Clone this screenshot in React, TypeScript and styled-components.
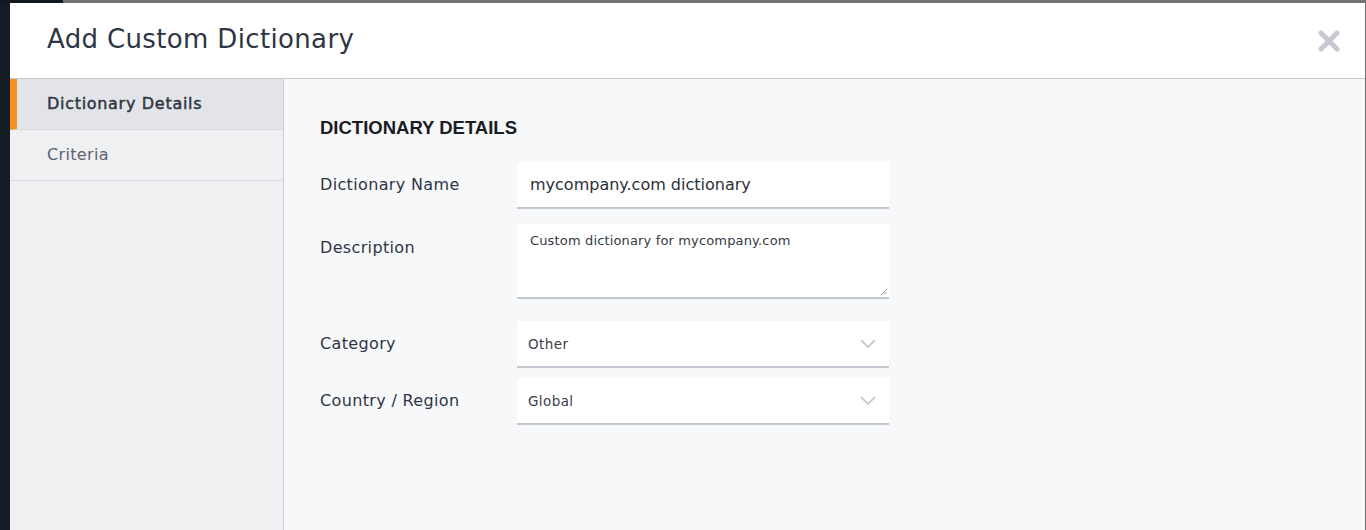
import React from "react";
import styled, { createGlobalStyle } from "styled-components";

const Global = createGlobalStyle`
  html, body { margin: 0; padding: 0; }
  body {
    width: 1366px;
    height: 530px;
    overflow: hidden;
    font-family: "DejaVu Sans", "Liberation Sans", sans-serif;
  }
`;

const Backdrop = styled.div`
  box-sizing: border-box;
  width: 1366px;
  height: 530px;
  padding: 3px 1px 0 10px;
  background:
    linear-gradient(to right, #111821 63px, #747474 63px) top left / 100% 3px no-repeat,
    linear-gradient(to right, #141c26 10px, #6b6b6b 10px);
  display: flex;
`;

const Modal = styled.div`
  flex: 1;
  display: flex;
  flex-direction: column;
  background: #f7f8fa;
  overflow: hidden;
`;

const Header = styled.header`
  height: 76px;
  box-sizing: border-box;
  flex: none;
  background: #ffffff;
  border-bottom: 1px solid #c6c9d1;
  display: flex;
  align-items: center;
  justify-content: space-between;
  padding: 0 24px 4px 37px;
`;

const Title = styled.h1`
  margin: 0;
  font-size: 26px;
  font-weight: 400;
  color: #2e3544;
  letter-spacing: 0.35px;
`;

const CloseButton = styled.button`
  border: 0;
  background: transparent;
  padding: 0;
  margin-top: 4px;
  width: 24px;
  height: 24px;
  display: flex;
  align-items: center;
  justify-content: center;
  cursor: pointer;
`;

const Body = styled.div`
  flex: 1;
  display: flex;
`;

const Sidebar = styled.nav`
  width: 273px;
  flex: none;
  background: #eff0f2;
  border-right: 1px solid #c9ccd2;
`;

const NavItem = styled.div<{ $active?: boolean }>`
  box-sizing: border-box;
  height: 51px;
  display: flex;
  align-items: center;
  padding-left: ${(p) => (p.$active ? "30px" : "37px")};
  padding-bottom: 2px;
  border-left: ${(p) => (p.$active ? "7px solid #f7901e" : "0")};
  border-bottom: 1px solid #d6d8dd;
  background: ${(p) => (p.$active ? "#e3e4e7" : "transparent")};
  color: ${(p) => (p.$active ? "#2e3544" : "#5b6270")};
  font-size: 16px;
  letter-spacing: ${(p) => (p.$active ? "0.7px" : "0.35px")};
  -webkit-text-stroke: ${(p) => (p.$active ? "0.45px #2e3544" : "0")};
`;

const Main = styled.main`
  flex: 1;
  padding: 39px 0 0 36px;
`;

const SectionTitle = styled.h2`
  margin: 0 0 24px;
  font-family: "Liberation Sans", Arial, sans-serif;
  font-weight: 700;
  font-size: 18.5px;
  line-height: 20px;
  color: #1b1d22;
`;

const Form = styled.div`
  display: flex;
  flex-direction: column;
`;

const Row = styled.div<{ $gap: number; $align?: string }>`
  display: grid;
  grid-template-columns: 197px 372px;
  align-items: ${(p) => p.$align || "center"};
  margin-bottom: ${(p) => p.$gap}px;
`;

const Label = styled.label<{ $top?: number }>`
  font-size: 16px;
  letter-spacing: 0.35px;
  color: #2e3544;
  padding-top: ${(p) => p.$top || 0}px;
  padding-bottom: ${(p) => (p.$top ? 0 : 2)}px;
`;

const Field = styled.div<{ $h: number }>`
  box-sizing: border-box;
  height: ${(p) => p.$h}px;
  background: #ffffff;
  border-radius: 2px 2px 0 0;
  border-bottom: 2px solid #c3c7d0;
  position: relative;
  display: flex;
  align-items: center;
  padding: 0 13px;
`;

const InputText = styled.span`
  font-size: 16px;
  color: #2b2f38;
`;

const AreaField = styled(Field)`
  align-items: flex-start;
  padding-top: 9px;
`;

const SmallText = styled.span`
  font-size: 13px;
  letter-spacing: 0.15px;
  color: #343a46;
`;

const OptionText = styled.span`
  font-size: 13.5px;
  letter-spacing: 0.4px;
  color: #3a404c;
`;

const SelectField = styled(Field)`
  justify-content: space-between;
  padding: 0 13px 0 11px;
`;

const Grip = styled.svg`
  position: absolute;
  right: 2px;
  bottom: 2px;
`;

const Chevron = () => (
  <svg width="16" height="10" viewBox="0 0 16 10">
    <path d="M1.5 1.5 L8 8 L14.5 1.5" fill="none" stroke="#c5c9d1" strokeWidth="1.8" strokeLinecap="round" />
  </svg>
);

export default function App() {
  return (
    <>
      <Global />
      <Backdrop>
        <Modal>
          <Header>
            <Title>Add Custom Dictionary</Title>
            <CloseButton aria-label="Close">
              <svg width="22" height="22" viewBox="0 0 22 22">
                <path d="M3 3 L19 19 M19 3 L3 19" stroke="#c6c9d0" strokeWidth="5" strokeLinecap="round" />
              </svg>
            </CloseButton>
          </Header>
          <Body>
            <Sidebar>
              <NavItem $active>Dictionary Details</NavItem>
              <NavItem>Criteria</NavItem>
            </Sidebar>
            <Main>
              <SectionTitle>DICTIONARY DETAILS</SectionTitle>
              <Form>
                <Row $gap={15}>
                  <Label>Dictionary Name</Label>
                  <Field $h={47}>
                    <InputText>mycompany.com dictionary</InputText>
                  </Field>
                </Row>
                <Row $gap={22} $align="start">
                  <Label $top={14}>Description</Label>
                  <AreaField $h={75}>
                    <SmallText>Custom dictionary for mycompany.com</SmallText>
                    <Grip width="6" height="6" viewBox="0 0 6 6">
                      <path d="M5.5 0.5 L0.5 5.5 M5.5 3 L3 5.5" stroke="#777" strokeWidth="0.8" />
                    </Grip>
                  </AreaField>
                </Row>
                <Row $gap={10}>
                  <Label>Category</Label>
                  <SelectField $h={47}>
                    <OptionText>Other</OptionText>
                    <Chevron />
                  </SelectField>
                </Row>
                <Row $gap={0}>
                  <Label>Country / Region</Label>
                  <SelectField $h={47}>
                    <OptionText>Global</OptionText>
                    <Chevron />
                  </SelectField>
                </Row>
              </Form>
            </Main>
          </Body>
        </Modal>
      </Backdrop>
    </>
  );
}
